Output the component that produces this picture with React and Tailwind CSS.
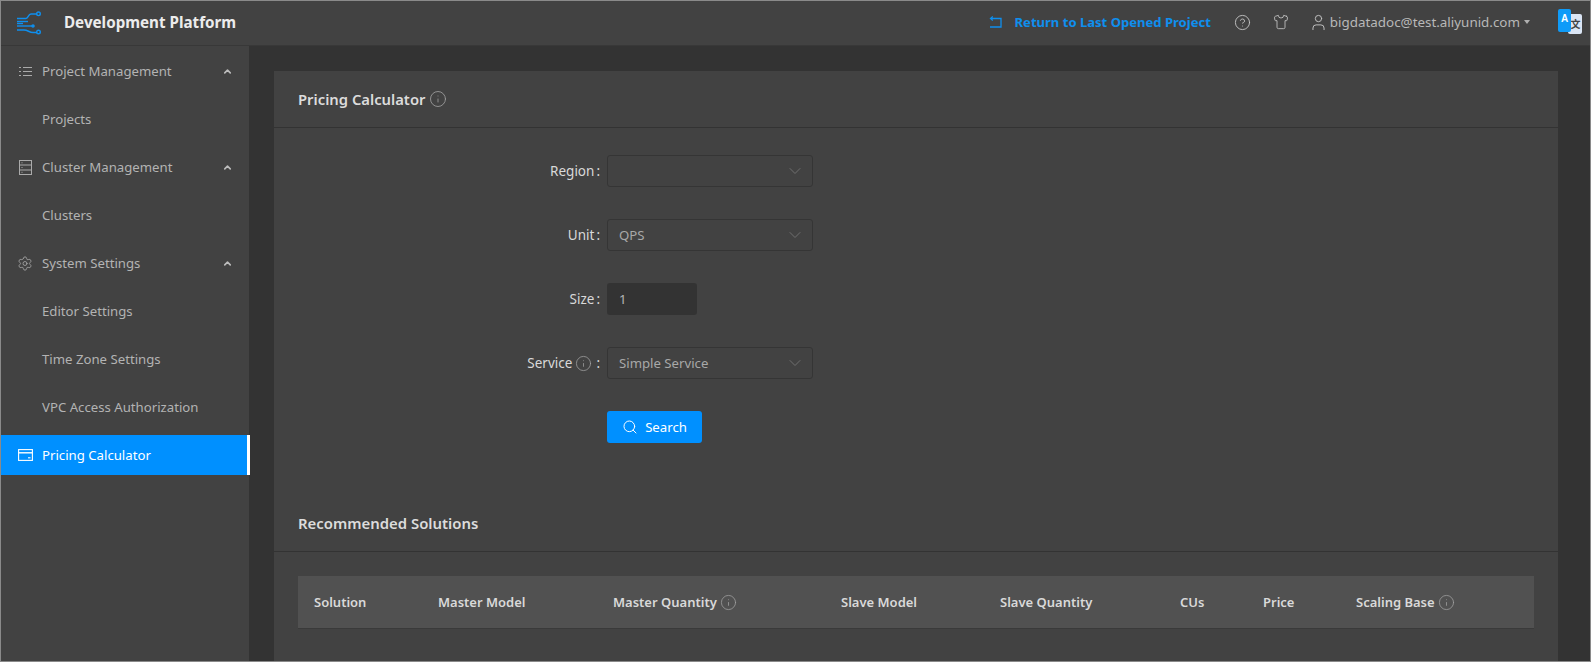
import React from "react";
import { Settings, ChevronUp, CircleHelp, Shirt, User, Info, ChevronDown, Search } from "lucide-react";

const font = "font-['Noto_Sans','Open_Sans',sans-serif]";

function Logo() {
  return (
    <svg width="25" height="26" viewBox="0 0 25 26" fill="none" stroke="#0f8fee" strokeWidth="1.4">
      <path d="M0 9.5h9c2.5 0 2-4.5 5-4.5h6" />
      <circle cx="21.5" cy="4.8" r="1.8" />
      <path d="M0 12.5h11" />
      <path d="M0 14.5h6" />
      <path d="M0 17h15" />
      <circle cx="16" cy="17" r="1.1" fill="#0f8fee" />
      <path d="M0 21h7c4 0 5 2.5 9 2.5h4" />
      <circle cx="21.5" cy="23" r="1.8" />
    </svg>
  );
}

function ListIcon() {
  return (
    <svg width="13" height="11" viewBox="0 0 13 11" fill="none" stroke="#aaa" strokeWidth="1">
      <path d="M0 1.5h2M0 5.5h2M0 9.5h2M4 1.5h9M4 5.5h9M4 9.5h9" />
    </svg>
  );
}

function ServerIcon() {
  return (
    <svg width="13" height="15" viewBox="0 0 13 15" fill="none" stroke="#aaa" strokeWidth="1">
      <rect x="0.5" y="0.5" width="12" height="14" />
      <path d="M0.5 5h12M0.5 10h12M2.5 2.8h1M2.5 7.5h1M2.5 12.3h1" />
    </svg>
  );
}

function CardIcon() {
  return (
    <svg width="15" height="12" viewBox="0 0 15 12" fill="none" stroke="#fff" strokeWidth="1.1">
      <rect x="0.6" y="0.6" width="13.8" height="10.8" />
      <path d="M0.6 3.8h13.8" strokeWidth="1.4" />
      <path d="M10 8.8h2.5" />
    </svg>
  );
}

function ReturnIcon() {
  return (
    <svg width="14" height="12" viewBox="0 0 14 12" fill="none" stroke="#0f8fee" strokeWidth="1.3">
      <path d="M2 2.5h10v8.5H1" />
      <path d="M3.8 0.5L1.5 2.5l2.3 2" />
    </svg>
  );
}

function Translate() {
  return (
    <div className="relative w-[24px] h-[25px] shrink-0">
      <div className="absolute left-[10px] top-[5px] w-[14px] h-[20px] rounded-[2px] bg-[#dbe5f4] flex items-center justify-center text-[10px] text-[#444] font-bold pl-[1px] font-['Noto_Sans_CJK_SC',sans-serif]">文</div>
      <div className="absolute left-0 top-0 w-[13px] h-[23px] rounded-[2px] bg-[#0f9bf8] flex items-start justify-center pt-[4px] text-[10px] leading-[12px] text-white font-bold font-['Liberation_Sans',sans-serif]">A</div>
    </div>
  );
}

function NavGroup({ icon, label }) {
  return (
    <div className="h-[40px] mb-[8px] flex items-center pl-[16px] pr-[16px] text-[#b3b3b3]">
      <span className="w-[16px] flex justify-center mr-[9px] shrink-0">{icon}</span>
      <span className="flex-1">{label}</span>
      <ChevronUp size={11} strokeWidth={3.5} className="text-[#bdbdbd]" />
    </div>
  );
}

function NavItem({ label }) {
  return <div className="h-[40px] mb-[8px] flex items-center pl-[41px] text-[#b3b3b3]">{label}</div>;
}

function Select({ value }) {
  return (
    <div className="w-[206px] h-[32px] rounded-[3px] border border-[#353535] flex items-center pl-[11px] pr-[7px] justify-between text-[#a8a8a8]">
      <span>{value}</span>
      <ChevronDown size={20} strokeWidth={1} className="text-[#777]" />
    </div>
  );
}

function FormRow({ label, children }) {
  return (
    <div className="h-[32px] mb-[32px] flex items-center">
      <div className="w-[333px] flex justify-end items-center text-[#d9d9d9] text-[13.5px] pr-[7px]">{label}</div>
      {children}
    </div>
  );
}

function Th({ w, children }) {
  return (
    <div style={{ width: w }} className="px-[16px] flex items-center gap-[3px] font-semibold text-[13px] text-[#d9d9d9] shrink-0">
      {children}
    </div>
  );
}

function Tip({ size = 17, className = "" }) {
  return <Info size={size} strokeWidth={1.1} className={`text-[#a0a0a0] ${className}`} />;
}

export default function App() {
  return (
    <div className={`${font} w-[1591px] h-[662px] overflow-hidden border border-[#8a8a8a] bg-[#333333] flex flex-col text-[13.2px] leading-[22px]`}>
      <header className="h-[45px] shrink-0 bg-[#424242] border-b border-[#383838] pb-[2px] flex items-center">
        <div className="w-[63px] pl-[16px] shrink-0 flex items-center"><Logo /></div>
        <div className="flex-1 text-[15.2px] font-bold text-[#ececec]">Development Platform</div>
        <div className="flex items-center text-[#0f8fee] font-bold text-[13.05px] mr-[23px]">
          <span className="mr-[12px]"><ReturnIcon /></span>
          <span>Return to Last Opened Project</span>
        </div>
        <CircleHelp size={17} strokeWidth={1.3} className="text-[#c4c4c4] mr-[22px]" />
        <Shirt size={16} strokeWidth={1.3} className="text-[#c4c4c4] mr-[20px]" />
        <User size={19} strokeWidth={1.2} className="text-[#c4c4c4] mr-[2px]" />
        <span className="text-[#b8b8b8] text-[13.4px]">bigdatadoc@test.aliyunid.com</span>
        <span className="ml-[4px] mr-[28px] w-0 h-0 border-x-[3px] border-x-transparent border-t-[4px] border-t-[#b0b0b0]" />
        <div className="mr-[8px] -mt-[2px]"><Translate /></div>
      </header>
      <div className="flex-1 flex min-h-0">
        <aside className="w-[248px] shrink-0 bg-[#424242] pt-[5px]">
          <NavGroup icon={<ListIcon />} label="Project Management" />
          <NavItem label="Projects" />
          <NavGroup icon={<ServerIcon />} label="Cluster Management" />
          <NavItem label="Clusters" />
          <NavGroup icon={<Settings size={17} strokeWidth={1.2} className="text-[#aaa]" />} label="System Settings" />
          <NavItem label="Editor Settings" />
          <NavItem label="Time Zone Settings" />
          <NavItem label="VPC Access Authorization" />
          <div className="h-[40px] -mr-[1px] flex items-center pl-[16px] bg-[#0090ff] text-white border-r-[3px] border-white">
            <span className="w-[16px] flex justify-center mr-[9px]"><CardIcon /></span>
            Pricing Calculator
          </div>
        </aside>
        <main className="flex-1 min-w-0 pl-[25px] pr-[32px] pt-[25px]">
          <div className="bg-[#424242] h-[600px]">
            <div className="h-[57px] border-b border-[#333333] flex items-center pl-[24px] gap-[4px]">
              <span className="text-[14.8px] font-semibold text-[#dcdcdc]">Pricing Calculator</span>
              <Tip size={18} />
            </div>
            <div className="pt-[27px]">
              <FormRow label={<><span>Region</span><span className="ml-[2px]">:</span></>}><Select value="" /></FormRow>
              <FormRow label={<><span>Unit</span><span className="ml-[2px]">:</span></>}><Select value="QPS" /></FormRow>
              <FormRow label={<><span>Size</span><span className="ml-[2px]">:</span></>}>
                <div className="w-[90px] h-[32px] rounded-[3px] bg-[#333333] flex items-center pl-[12px] text-[#b3b3b3]">1</div>
              </FormRow>
              <FormRow label={<><span>Service</span><Tip className="mx-[3px]" /><span className="ml-[1px]">:</span></>}>
                <Select value="Simple Service" />
              </FormRow>
              <div className="pl-[333px]">
                <div className="w-[95px] h-[32px] rounded-[3px] bg-[#0090ff] text-white flex items-center justify-center gap-[7px]">
                  <Search size={16} strokeWidth={1.5} />
                  Search
                </div>
              </div>
            </div>
            <div className="mt-[51px] h-[58px] border-b border-[#333333] flex items-center pl-[24px] text-[14.9px] font-semibold text-[#dcdcdc]">
              Recommended Solutions
            </div>
            <div className="mx-[24px] mt-[24px] h-[53px] bg-[#515151] border-b border-[#3a3a3a] flex">
              <Th w={124}>Solution</Th>
              <Th w={175}>Master Model</Th>
              <Th w={228}>Master Quantity<Tip /></Th>
              <Th w={159}>Slave Model</Th>
              <Th w={180}>Slave Quantity</Th>
              <Th w={83}>CUs</Th>
              <Th w={93}>Price</Th>
              <Th w={193}>Scaling Base<Tip /></Th>
            </div>
          </div>
        </main>
      </div>
    </div>
  );
}
